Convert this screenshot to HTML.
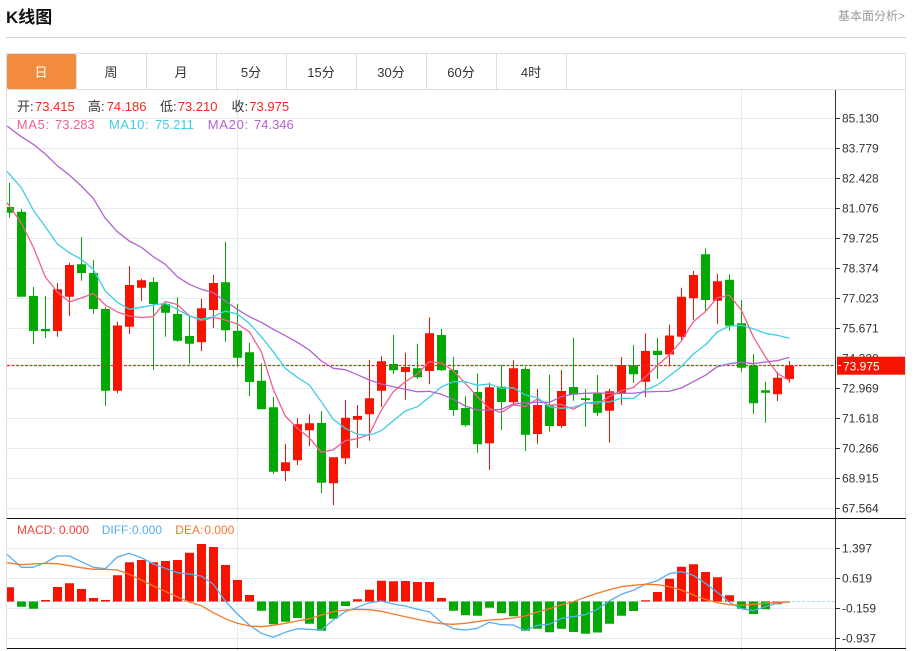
<!DOCTYPE html>
<html><head><meta charset="utf-8"><style>
html,body{margin:0;padding:0;background:#fff;width:914px;height:651px;overflow:hidden}
svg{display:block;font-family:"Liberation Sans","Noto Sans CJK SC",sans-serif}
.g{fill:#e3ecf3}
.ax{font-size:12px;fill:#333}
.tb{font-size:13px;fill:#333;text-anchor:middle}
.l{font-size:13px}
.m{font-size:12px}
.ln{fill:none;stroke-width:1.3;stroke-linejoin:round}
</style></head><body>
<svg width="914" height="651" viewBox="0 0 914 651" xmlns="http://www.w3.org/2000/svg">
<text x="6" y="23" font-size="17" font-weight="700" fill="#111">K线图</text>
<text x="838" y="20" font-size="12" fill="#999">基本面分析&gt;</text>
<rect x="6" y="37" width="900" height="1" fill="#d0d0d0"/>
<!-- frame -->
<rect x="6" y="53" width="900" height="1" fill="#dcdfe2"/>
<rect x="6" y="89" width="900" height="1" fill="#dcdfe2"/>
<rect x="6" y="53" width="1" height="598" fill="#dcdfe2"/>
<rect x="905" y="53" width="1" height="598" fill="#dcdfe2"/>
<rect x="76" y="53" width="1" height="36" fill="#dcdfe2"/><rect x="146" y="53" width="1" height="36" fill="#dcdfe2"/><rect x="216" y="53" width="1" height="36" fill="#dcdfe2"/><rect x="286" y="53" width="1" height="36" fill="#dcdfe2"/><rect x="356" y="53" width="1" height="36" fill="#dcdfe2"/><rect x="426" y="53" width="1" height="36" fill="#dcdfe2"/><rect x="496" y="53" width="1" height="36" fill="#dcdfe2"/><rect x="566" y="53" width="1" height="36" fill="#dcdfe2"/>
<rect x="7" y="54" width="69" height="35" rx="2" fill="#f38b3e"/>
<text class="tb" x="41" y="77" style="fill:#fff">日</text>
<text class="tb" x="111" y="77">周</text>
<text class="tb" x="181" y="77">月</text>
<text class="tb" x="251" y="77">5分</text>
<text class="tb" x="321" y="77">15分</text>
<text class="tb" x="391" y="77">30分</text>
<text class="tb" x="461" y="77">60分</text>
<text class="tb" x="531" y="77">4时</text>
<!-- grid -->
<rect class="g" x="7" y="118" width="828" height="1"/><rect class="g" x="7" y="148" width="828" height="1"/><rect class="g" x="7" y="178" width="828" height="1"/><rect class="g" x="7" y="208" width="828" height="1"/><rect class="g" x="7" y="238" width="828" height="1"/><rect class="g" x="7" y="268" width="828" height="1"/><rect class="g" x="7" y="298" width="828" height="1"/><rect class="g" x="7" y="328" width="828" height="1"/><rect class="g" x="7" y="358" width="828" height="1"/><rect class="g" x="7" y="388" width="828" height="1"/><rect class="g" x="7" y="418" width="828" height="1"/><rect class="g" x="7" y="448" width="828" height="1"/><rect class="g" x="7" y="478" width="828" height="1"/><rect class="g" x="7" y="508" width="828" height="1"/>
<rect class="g" x="7" y="548" width="828" height="1"/><rect class="g" x="7" y="578" width="828" height="1"/><rect class="g" x="7" y="608" width="828" height="1"/><rect class="g" x="7" y="638" width="828" height="1"/>
<rect class="g" x="237" y="90" width="1" height="561"/><rect class="g" x="741" y="90" width="1" height="561"/>
<!-- green candles -->
<path fill="#02a902" d="M7 207h7v5.7h-7zM9 182.7h1V217.7h-1zM17 211.7h9V296.7h-9zM21 209h1V212h-1zM29 296h9V331h-9zM33 287h1V344h-1zM41 329h9V331.3h-9zM45 296h1V338h-1zM77 264.3h9V273h-9zM81 237.3h1V280.7h-1zM89 273h9V309h-9zM93 260h1V313.7h-1zM101 309h9V390.7h-9zM105 306.7h1V406h-1zM149 282h9V304h-9zM153 277.3h1V370h-1zM161 304h9V312.7h-9zM165 302.7h1V336.7h-1zM173 314h9V340.7h-9zM177 297.3h1V341.7h-1zM185 336h9V343.7h-9zM189 315h1V363.7h-1zM221 282.3h9V330.3h-9zM225 241.7h1V341.7h-1zM233 330.7h9V357.7h-9zM237 304h1V366.7h-1zM245 352.3h9V382h-9zM249 342.7h1V396h-1zM257 380.7h9V409.3h-9zM261 363.3h1V409h-1zM269 407.3h9V471.7h-9zM273 397h1V474h-1zM317 423h9V482.7h-9zM321 411h1V493.3h-1zM389 364h9V370.3h-9zM393 335h1V374h-1zM413 368.3h9V377.3h-9zM417 343.7h1V379h-1zM437 335h9V370.3h-9zM441 329h1V371h-1zM449 370h9V410h-9zM453 356.7h1V416h-1zM461 408h9V425.3h-9zM465 396.3h1V426.7h-1zM473 392h9V444.3h-9zM477 373.3h1V452.7h-1zM497 386.7h9V402h-9zM501 365h1V430h-1zM521 369h9V434.7h-9zM525 366.7h1V451h-1zM545 405h9V426h-9zM549 374.7h1V431.7h-1zM569 387h9V394.7h-9zM573 337.7h1V400.7h-1zM581 398.3h9V400h-9zM585 389h1V426.7h-1zM593 393h9V412.7h-9zM597 375h1V416h-1zM629 365.3h9V374.3h-9zM633 345h1V383h-1zM653 350.7h9V355h-9zM657 337.7h1V378.7h-1zM701 254.3h9V300h-9zM705 248.3h1V311.7h-1zM725 279.7h9V325.7h-9zM729 274.3h1V330.7h-1zM737 323.3h9V367.7h-9zM741 300h1V371.7h-1zM749 365.7h9V403.3h-9zM753 354h1V414h-1zM761 390.3h9V392.7h-9zM765 381.7h1V422.7h-1z"/>
<!-- red candles -->
<path fill="#f61400" d="M53 289.3h9V331h-9zM57 283h1V336.7h-1zM65 265h9V296.7h-9zM69 262.7h1V316h-1zM113 325.5h9V390.7h-9zM117 321.7h1V393.3h-1zM125 285h9V326.7h-9zM129 266h1V334h-1zM137 280.3h9V287.7h-9zM141 278.7h1V301h-1zM197 308.3h9V342.3h-9zM201 298.7h1V351h-1zM209 283h9V310h-9zM213 275h1V328h-1zM281 462.3h9V471h-9zM285 444h1V481h-1zM293 424.3h9V460.3h-9zM297 418.3h1V465h-1zM305 423.3h9V430.3h-9zM309 414.3h1V446.3h-1zM329 457.3h9V483.3h-9zM333 457.3h1V505h-1zM341 417.7h9V458.3h-9zM345 400h1V464.3h-1zM353 416h9V419.7h-9zM357 405h1V447.7h-1zM365 398.3h9V414.3h-9zM369 360h1V440.7h-1zM377 361.3h9V390.7h-9zM381 356h1V406.7h-1zM401 367h9V372h-9zM405 352.7h1V399.7h-1zM425 333.3h9V371h-9zM429 317.3h1V384.3h-1zM485 387.3h9V443.3h-9zM489 382.7h1V470h-1zM509 368.3h9V402.3h-9zM513 360.3h1V405h-1zM533 405h9V434h-9zM537 389h1V443.7h-1zM557 391h9V426h-9zM561 370h1V428h-1zM605 391.3h9V410.7h-9zM609 389h1V442.7h-1zM617 365h9V393h-9zM621 357h1V404.7h-1zM641 351h9V381.7h-9zM645 333.3h1V397h-1zM665 335.5h9V354.5h-9zM669 324.8h1V366.5h-1zM677 296.7h9V336.7h-9zM681 287.7h1V341h-1zM689 275h9V298.3h-9zM693 271h1V320h-1zM713 281.3h9V300.7h-9zM717 273.7h1V324h-1zM773 377.7h9V394.3h-9zM777 371.7h1V401h-1zM785 365.7h9V379h-9zM789 361h1V382.7h-1z"/>
<!-- last price line -->
<line x1="7" y1="365.5" x2="835" y2="365.5" stroke="#f8201a" stroke-width="1.2" stroke-dasharray="3 1.500"/>
<!-- MA lines -->
<polyline class="ln" stroke="#f0608f" points="7,202.5 21.3,223 33.3,247 45.3,277 57.3,292 69.3,302 81.3,298 93.3,293.5 105.3,305 117.3,312 129.3,316 141.3,317.5 153.3,316.7 165.3,301.5 177.3,304.5 189.3,315.7 201.3,320.7 213.3,317.3 225.3,320 237.3,324 249.3,331.7 261.3,351.7 273.3,389.3 285.3,416 297.3,428.3 309.3,437.7 321.3,452.3 333.3,449.7 345.3,440.7 357.3,438.7 369.3,434.3 381.3,410 393.3,391.7 405.3,381.7 417.3,374 429.3,361.7 441.3,363 453.3,370.7 465.3,383.3 477.3,396.7 489.3,408.3 501.3,412.7 513.3,405 525.3,406.3 537.3,399 549.3,405.3 561.3,404.3 573.3,409.3 585.3,402.7 597.3,404 609.3,396.7 621.3,390.7 633.3,387.5 645.3,377 657.3,365.5 669.3,355 681.3,341 693.3,321.7 705.3,311.7 717.3,297.7 729.3,295.3 741.3,310 753.3,336.7 765.3,356.7 777.3,373.3 789.3,380.7"/>
<polyline class="ln" stroke="#3fcde3" points="7,171.3 21.3,187.7 33.3,210 45.3,226.7 57.3,244 69.3,252.7 81.3,259.3 93.3,269.3 105.3,291 117.3,302.3 129.3,309.3 141.3,307.3 153.3,305 165.3,303.3 177.3,309.3 189.3,316 201.3,319.3 213.3,316.7 225.3,311 237.3,314 249.3,323.3 261.3,336.7 273.3,351.7 285.3,368.3 297.3,377.3 309.3,385 321.3,401.7 333.3,419.3 345.3,428.3 357.3,434.3 369.3,435.3 381.3,430.7 393.3,420.7 405.3,411 417.3,406.7 429.3,397.3 441.3,387 453.3,381.7 465.3,381.7 477.3,385.3 489.3,384 501.3,388.3 513.3,387.7 525.3,395 537.3,397.7 549.3,406.7 561.3,408.3 573.3,407.3 585.3,403.3 597.3,401.7 609.3,402 621.3,398.3 633.3,398.5 645.3,390 657.3,385 669.3,376 681.3,366.7 693.3,354 705.3,345 717.3,332 729.3,326 741.3,325.3 753.3,328.7 765.3,333.3 777.3,335.3 789.3,338.3"/>
<polyline class="ln" stroke="#b362cf" points="7,126 21.3,136.7 33.3,144.3 45.3,154 57.3,165.7 69.3,175 81.3,186 93.3,198.3 105.3,218.3 117.3,231.7 129.3,241 141.3,247.3 153.3,256.7 165.3,264.3 177.3,276.7 189.3,284.3 201.3,289.3 213.3,292.7 225.3,301 237.3,309.3 249.3,316.7 261.3,322.3 273.3,329.3 285.3,335.7 297.3,342.3 309.3,350 321.3,361 333.3,368.3 345.3,369.7 357.3,374.7 369.3,380 381.3,384 393.3,386.7 405.3,389.3 417.3,391.7 429.3,391.3 441.3,394.3 453.3,399.3 465.3,406 477.3,410 489.3,410 501.3,409.3 513.3,404 525.3,402.7 537.3,402.3 549.3,402.3 561.3,396.7 573.3,394 585.3,393.3 597.3,393 609.3,393.3 621.3,393.3 633.3,393.2 645.3,392 657.3,391.5 669.3,391.3 681.3,388 693.3,381.7 705.3,375.3 717.3,366.7 729.3,363.7 741.3,362.3 753.3,363.7 765.3,362 777.3,360.7 789.3,357.3"/>
<!-- legend -->
<g class="l" fill="#333"><text x="17" y="111">开:</text><text x="88" y="111">高:</text><text x="160" y="111">低:</text><text x="231.500" y="111">收:</text></g>
<g class="l" fill="#f6261c"><text x="35" y="111">73.415</text><text x="106.700" y="111">74.186</text><text x="177.700" y="111">73.210</text><text x="249.300" y="111">73.975</text></g>
<g class="l" fill="#f0608f"><text x="16.700" y="129" textLength="32.500">MA5:</text><text x="55" y="129">73.283</text></g>
<g class="l" fill="#3fcde3"><text x="109" y="129" textLength="39.500">MA10:</text><text x="155" y="129">75.211</text></g>
<g class="l" fill="#b362cf"><text x="207.700" y="129" textLength="40.500">MA20:</text><text x="254" y="129">74.346</text></g>
<!-- pane lines -->
<rect x="7" y="518" width="899" height="1" fill="#111"/>
<rect x="7" y="648" width="899" height="1" fill="#111"/>
<rect x="835" y="90" width="1" height="561" fill="#333"/>
<!-- axis labels -->
<g fill="#333"><rect x="836" y="118" width="4" height="1"/><rect x="836" y="148" width="4" height="1"/><rect x="836" y="178" width="4" height="1"/><rect x="836" y="208" width="4" height="1"/><rect x="836" y="238" width="4" height="1"/><rect x="836" y="268" width="4" height="1"/><rect x="836" y="298" width="4" height="1"/><rect x="836" y="328" width="4" height="1"/><rect x="836" y="388" width="4" height="1"/><rect x="836" y="418" width="4" height="1"/><rect x="836" y="448" width="4" height="1"/><rect x="836" y="478" width="4" height="1"/><rect x="836" y="508" width="4" height="1"/><rect x="836" y="548" width="4" height="1"/><rect x="836" y="578" width="4" height="1"/><rect x="836" y="608" width="4" height="1"/><rect x="836" y="638" width="4" height="1"/></g>
<text class="ax" x="842" y="122.500">85.130</text><text class="ax" x="842" y="152.500">83.779</text><text class="ax" x="842" y="182.500">82.428</text><text class="ax" x="842" y="212.500">81.076</text><text class="ax" x="842" y="242.500">79.725</text><text class="ax" x="842" y="272.500">78.374</text><text class="ax" x="842" y="302.500">77.023</text><text class="ax" x="842" y="332.500">75.671</text><text class="ax" x="842" y="362.500">74.320</text><text class="ax" x="842" y="392.500">72.969</text><text class="ax" x="842" y="422.500">71.618</text><text class="ax" x="842" y="452.500">70.266</text><text class="ax" x="842" y="482.500">68.915</text><text class="ax" x="842" y="512.500">67.564</text>
<text class="ax" x="842" y="552.500">1.397</text><text class="ax" x="842" y="582.500">0.619</text><text class="ax" x="842" y="612.500">-0.159</text><text class="ax" x="842" y="642.500">-0.937</text>
<!-- price tag -->
<rect x="837" y="356.700" width="68" height="18" fill="#f61400"/>
<rect x="838" y="365" width="3" height="1" fill="#fff"/>
<text x="843" y="370.500" font-size="12" fill="#fff">73.975</text>
<!-- MACD legend -->
<g class="m" fill="#f0443c"><text x="17" y="534">MACD:</text><text x="59" y="534">0.000</text></g>
<g class="m" fill="#58adf0"><text x="101.700" y="534">DIFF:</text><text x="132" y="534">0.000</text></g>
<g class="m" fill="#f47a2c"><text x="175.300" y="534">DEA:</text><text x="204.300" y="534">0.000</text></g>
<!-- MACD zero line -->
<line x1="7" y1="601.500" x2="835" y2="601.500" stroke="#a9dcf2" stroke-width="1" stroke-dasharray="3 2"/>
<!-- MACD bars -->
<path fill="#f61400" d="M7 587.300h7V601.500h-7zM41 600h9V601.500h-9zM53 587h9V601.500h-9zM65 583.300h9V601.500h-9zM77 589h9V601.500h-9zM89 598h9V601.500h-9zM101 600h9V601.500h-9zM113 575.300h9V601.500h-9zM125 562.300h9V601.500h-9zM137 560h9V601.500h-9zM149 562.300h9V601.500h-9zM161 561h9V601.500h-9zM173 560h9V601.500h-9zM185 552.700h9V601.500h-9zM197 544h9V601.500h-9zM209 547h9V601.500h-9zM221 565h9V601.500h-9zM233 580h9V601.500h-9zM245 595h9V601.500h-9zM353 599.300h9V601.500h-9zM365 589.700h9V601.500h-9zM377 580.700h9V601.500h-9zM389 581.300h9V601.500h-9zM401 581h9V601.500h-9zM413 582h9V601.500h-9zM425 582h9V601.500h-9zM437 598h9V601.500h-9zM641 600.300h9V601.500h-9zM653 592h9V601.500h-9zM665 578.700h9V601.500h-9zM677 566.700h9V601.500h-9zM689 564.300h9V601.500h-9zM701 572h9V601.500h-9zM713 577.300h9V601.500h-9zM725 595.300h9V601.500h-9z"/>
<path fill="#02a902" d="M17 601.500h9V606.700h-9zM29 601.500h9V608.700h-9zM257 601.500h9V610.700h-9zM269 601.500h9V624.300h-9zM281 601.500h9V621.700h-9zM293 601.500h9V618h-9zM305 601.500h9V623.700h-9zM317 601.500h9V630.700h-9zM329 601.500h9V618.700h-9zM341 601.500h9V606h-9zM449 601.500h9V610.700h-9zM461 601.500h9V615.300h-9zM473 601.500h9V615.700h-9zM485 601.500h9V607.700h-9zM497 601.500h9V613.300h-9zM509 601.500h9V616.300h-9zM521 601.500h9V630.700h-9zM533 601.500h9V628.700h-9zM545 601.500h9V632.300h-9zM557 601.500h9V628.700h-9zM569 601.500h9V632h-9zM581 601.500h9V633.700h-9zM593 601.500h9V632.500h-9zM605 601.500h9V623.700h-9zM617 601.500h9V615.700h-9zM629 601.500h9V611h-9zM737 601.500h9V608.700h-9zM749 601.500h9V614h-9zM761 601.500h9V609.300h-9zM773 601.500h9V604.300h-9zM785 601.500h5V602.500h-5z"/>
<!-- DIFF / DEA -->
<polyline class="ln" stroke="#58adf0" points="7,554.300 21.300,567.300 33.300,567.300 45.300,562.700 57.300,556 69.300,556 81.300,561.700 93.300,567.300 105.300,568.700 117.300,557 129.300,553.300 141.300,557.700 153.300,564 165.300,568.300 177.300,572.700 189.300,574 201.300,576 213.300,584.300 225.300,601 237.300,614 249.300,625 261.300,633.300 273.300,637.300 285.300,632.300 297.300,628.700 309.300,629.300 321.300,630 333.300,620 345.300,611.700 357.300,607.300 369.300,602.700 381.300,601 393.300,604 405.300,606 417.300,609.300 429.300,611.700 441.300,622.300 453.300,628.700 465.300,630 477.300,628.300 489.300,622.300 501.300,624.700 513.300,625 525.300,630.700 537.300,625.300 549.300,624.300 561.300,618.300 573.300,616.700 585.300,614.700 597.300,609.300 609.300,601 621.300,594.300 633.300,590.300 645.300,584.300 657.300,580.700 669.300,573.700 681.300,571.700 693.300,575.300 705.300,583.300 717.300,592.300 729.300,602.300 741.300,608.700 753.300,610.700 765.300,606.700 777.300,603 789.300,602"/>
<polyline class="ln" stroke="#f47a2c" points="7,562.700 21.300,564.700 33.300,564 45.300,563.300 57.300,563.700 69.300,565.700 81.300,567.700 93.300,569.300 105.300,569.300 117.300,570 129.300,574.300 141.300,580 153.300,586 165.300,591.300 177.300,597 189.300,602 201.300,605.700 213.300,612.700 225.300,618.700 237.300,623.300 249.300,626 261.300,626.700 273.300,625.300 285.300,623.300 297.300,621 309.300,618.700 321.300,615 333.300,611.700 345.300,610 357.300,609.300 369.300,609.700 381.300,611.300 393.300,614 405.300,616.700 417.300,619.300 429.300,621.700 441.300,623.700 453.300,624.300 465.300,623.300 477.300,621.700 489.300,620 501.300,619.300 513.300,618 525.300,616 537.300,612 549.300,608.700 561.300,605 573.300,601.700 585.300,597.300 597.300,593.300 609.300,589.700 621.300,586.700 633.300,585.300 645.300,584.300 657.300,584.700 669.300,586.700 681.300,590 693.300,595 705.300,599.300 717.300,602.700 729.300,604.700 741.300,605.300 753.300,604.300 765.300,603.300 777.300,602.300 789.300,602"/>
</svg>
</body></html>
